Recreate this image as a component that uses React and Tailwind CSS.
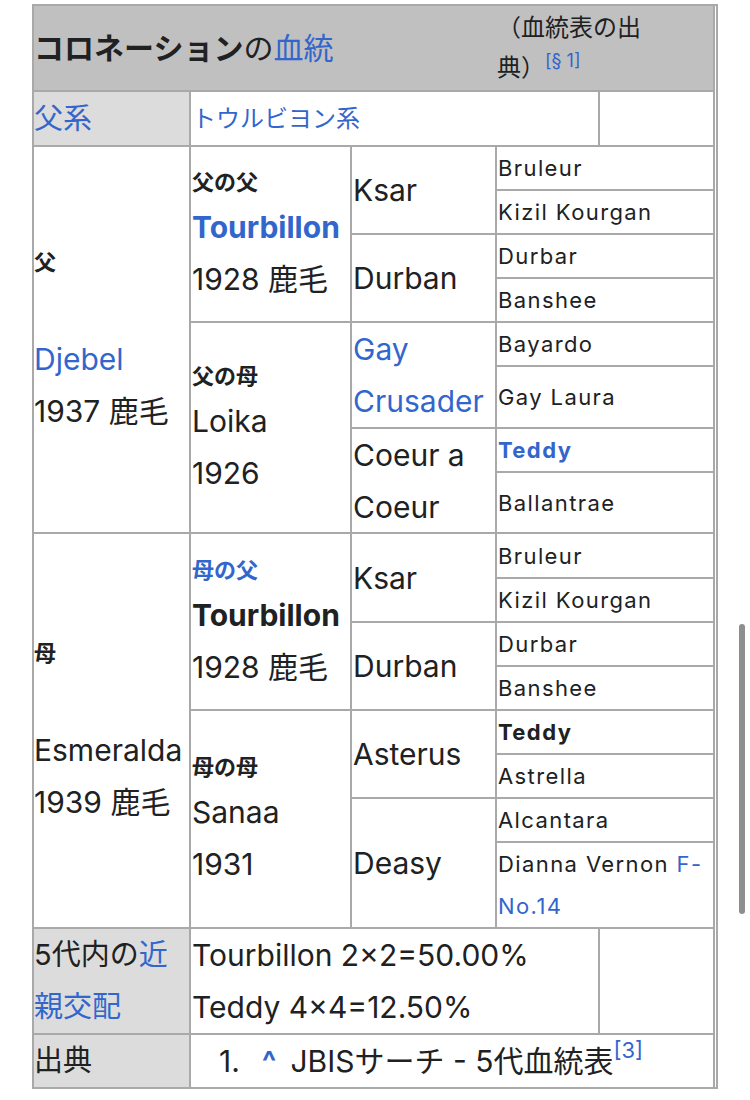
import React from "react";

const LINK = "text-[#3366cc]";

const gen4 = [
  { t: "Bruleur", row: "row-start-3" },
  { t: "Kizil Kourgan", row: "row-start-4" },
  { t: "Durbar", row: "row-start-5" },
  { t: "Banshee", row: "row-start-6" },
  { t: "Bayardo", row: "row-start-7" },
  { t: "Gay Laura", row: "row-start-8" },
  { t: "Teddy", row: "row-start-9", bold: true, link: true },
  { t: "Ballantrae", row: "row-start-10" },
  { t: "Bruleur", row: "row-start-11" },
  { t: "Kizil Kourgan", row: "row-start-12" },
  { t: "Durbar", row: "row-start-13" },
  { t: "Banshee", row: "row-start-14" },
  { t: "Teddy", row: "row-start-15", bold: true },
  { t: "Astrella", row: "row-start-16" },
  { t: "Alcantara", row: "row-start-17" },
  { t: "Dianna Vernon", row: "row-start-18", fno: true },
];

const gen3 = [
  { lines: ["Ksar"], row: "row-start-3" },
  { lines: ["Durban"], row: "row-start-5" },
  { lines: ["Gay", "Crusader"], row: "row-start-7", link: true },
  { lines: ["Coeur a", "Coeur"], row: "row-start-9" },
  { lines: ["Ksar"], row: "row-start-11" },
  { lines: ["Durban"], row: "row-start-13" },
  { lines: ["Asterus"], row: "row-start-15" },
  { lines: ["Deasy"], row: "row-start-17" },
];

const gen2 = [
  { label: "父の父", name: "Tourbillon", bold: true, link: true, year: "1928 鹿毛", row: "row-start-3" },
  { label: "父の母", name: "Loika", year: "1926", row: "row-start-7" },
  { label: "母の父", labelLink: true, name: "Tourbillon", bold: true, year: "1928 鹿毛", row: "row-start-11" },
  { label: "母の母", name: "Sanaa", year: "1931", row: "row-start-15" },
];

export default function App() {
  return (
    <div className="relative min-h-[1100px] w-[750px] bg-white pt-[4px] font-['Inter','Noto_Sans_CJK_JP',sans-serif] text-[#202122]">
      <div className="ml-[32px] w-[686px] border-2 border-[#a9a9a9] bg-white">
        <div className="grid w-[681px] grid-cols-[155px_159px_143px_216px] grid-rows-[84px_53px_42px_42px_42px_42px_42px_60px_42px_59px_43px_42px_42px_42px_42px_42px_42px_84px_104px_52px] gap-[2px] border-r-2 border-[#a9a9a9] bg-[#a9a9a9]">
          {/* header */}
          <div className="col-span-4 row-start-1 flex items-center justify-between bg-[#c0c0c0]">
            <div className="text-[30px] leading-[40px]">
              <span className="font-bold">コロネーション</span>
              <span>の</span>
              <span className={LINK}>血統</span>
            </div>
            <div className="w-[216px] text-[24px] leading-[40px]">
              <div>（血統表の出</div>
              <div>
                典）<sup className={`text-[18px] ${LINK}`}>[§ 1]</sup>
              </div>
            </div>
          </div>

          {/* 父系 row */}
          <div className={`col-start-1 row-start-2 flex items-center bg-[#dcdcdc] text-[29px] ${LINK}`}>父系</div>
          <div className="col-span-3 col-start-2 row-start-2 grid grid-cols-[407px_113px] gap-[2px]">
            <div className={`flex items-center bg-white pl-[1px] text-[24px] ${LINK}`}>トウルビヨン系</div>
            <div className="bg-white" />
          </div>

          {/* gen1 */}
          <div className="col-start-1 row-span-8 row-start-3 flex flex-col justify-center bg-white">
            <div className="text-[22px] font-bold leading-[38px]">父</div>
            <div className="h-[52px]" />
            <div className={`text-[30px] leading-[52px] ${LINK}`}>Djebel</div>
            <div className="text-[30px] leading-[52px]">1937 鹿毛</div>
          </div>
          <div className="col-start-1 row-span-8 row-start-11 flex flex-col justify-center bg-white">
            <div className="text-[22px] font-bold leading-[38px]">母</div>
            <div className="h-[52px]" />
            <div className="text-[30px] leading-[52px]">Esmeralda</div>
            <div className="text-[30px] leading-[52px]">1939 鹿毛</div>
          </div>

          {/* gen2 */}
          {gen2.map((g, i) => (
            <div key={i} className={`col-start-2 row-span-4 ${g.row} flex flex-col justify-center bg-white pl-[1px]`}>
              <div className={`text-[22px] font-bold leading-[38px] ${g.labelLink ? LINK : ""}`}>{g.label}</div>
              <div className={`text-[30px] leading-[52px] ${g.bold ? "font-bold" : ""} ${g.link ? LINK : ""}`}>{g.name}</div>
              <div className="text-[30px] leading-[52px]">{g.year}</div>
            </div>
          ))}

          {/* gen3 */}
          {gen3.map((g, i) => (
            <div key={i} className={`col-start-3 row-span-2 ${g.row} flex flex-col justify-center bg-white pl-[1px] text-[30px] leading-[52px] ${g.link ? LINK : ""}`}>
              {g.lines.map((l, j) => (
                <div key={j}>{l}</div>
              ))}
            </div>
          ))}

          {/* gen4 */}
          {gen4.map((g, i) => (
            <div key={i} className={`col-start-4 ${g.row} flex flex-col justify-center bg-white pl-[1px] text-[22px] leading-[42px] tracking-[1.4px]`}>
              {g.fno ? (
                <>
                  <div>
                    Dianna Vernon <span className={LINK}>F-</span>
                  </div>
                  <div className={LINK}>No.14</div>
                </>
              ) : (
                <div className={`${g.bold ? "font-bold" : ""} ${g.link ? LINK : ""}`}>{g.t}</div>
              )}
            </div>
          ))}

          {/* inbreeding */}
          <div className="col-start-1 row-start-19 flex flex-col justify-center bg-[#dcdcdc] text-[29px] leading-[52px]">
            <div>
              5代内の<span className={LINK}>近</span>
            </div>
            <div className={LINK}>親交配</div>
          </div>
          <div className="col-span-3 col-start-2 row-start-19 grid grid-cols-[407px_113px] gap-[2px]">
            <div className="flex flex-col justify-center bg-white pl-[1px] text-[30px] leading-[52px]">
              <div>Tourbillon 2×2=50.00%</div>
              <div>Teddy 4×4=12.50%</div>
            </div>
            <div className="bg-white" />
          </div>

          {/* sources */}
          <div className="col-start-1 row-start-20 flex items-center bg-[#dcdcdc] text-[29px]">出典</div>
          <div className="col-span-3 col-start-2 row-start-20 flex items-center bg-white pl-[28px] text-[30px] leading-[52px]">
            <span>1.</span>
            <span className={`ml-[22px] font-bold ${LINK}`}>^</span>
            <span className="ml-[14px]">JBISサーチ - 5代血統表</span>
            <sup className={`text-[22px] ${LINK}`}>[3]</sup>
          </div>
        </div>
      </div>

      {/* scroll indicator */}
      <div className="absolute left-[739px] top-[624px] h-[290px] w-[6px] rounded-full bg-[#8e8e8e]" />
    </div>
  );
}
